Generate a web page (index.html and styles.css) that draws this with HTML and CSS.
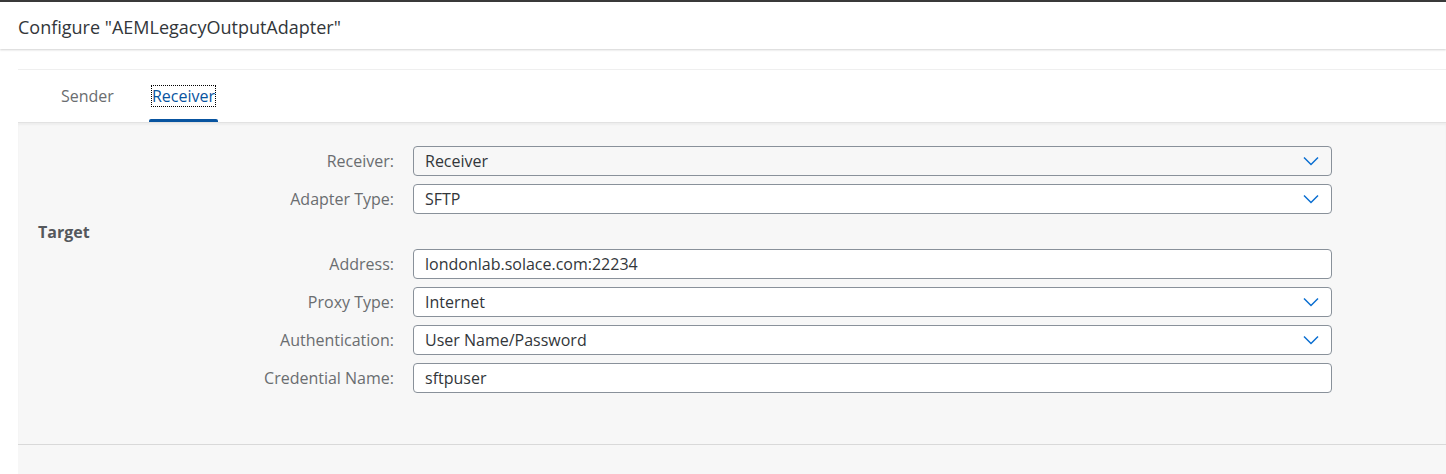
FILE: index.html
```html
<!DOCTYPE html>
<html lang="en">
<head>
<meta charset="utf-8">
<title>Configure AEMLegacyOutputAdapter</title>
<link rel="stylesheet" href="styles.css">
</head>
<body>
<div class="dialog">
  <header class="dlg-header">
    <h1 class="dlg-title">Configure "AEMLegacyOutputAdapter"</h1>
  </header>
  <div class="dlg-body">
    <nav class="tabbar">
      <div class="tab"><span class="tab-text">Sender</span></div>
      <div class="tab tab-active"><span class="tab-text tab-focus">Receiver</span></div>
    </nav>
    <section class="content">
      <div class="form">
        <div class="group">
          <label class="lbl">Receiver:</label>
          <div class="field field-ro">
            <span class="val">Receiver</span>
            <svg class="chev" width="16" height="10" viewBox="0 0 16 10"><polyline points="1,1.5 8,8.5 15,1.5" fill="none" stroke="#0a6ed1" stroke-width="1.5"/></svg>
          </div>
          <label class="lbl">Adapter Type:</label>
          <div class="field">
            <span class="val">SFTP</span>
            <svg class="chev" width="16" height="10" viewBox="0 0 16 10"><polyline points="1,1.5 8,8.5 15,1.5" fill="none" stroke="#0a6ed1" stroke-width="1.5"/></svg>
          </div>
        </div>
        <div class="group-title">Target</div>
        <div class="group">
          <label class="lbl">Address:</label>
          <div class="field"><span class="val">londonlab.solace.com:22234</span></div>
          <label class="lbl">Proxy Type:</label>
          <div class="field">
            <span class="val">Internet</span>
            <svg class="chev" width="16" height="10" viewBox="0 0 16 10"><polyline points="1,1.5 8,8.5 15,1.5" fill="none" stroke="#0a6ed1" stroke-width="1.5"/></svg>
          </div>
          <label class="lbl">Authentication:</label>
          <div class="field">
            <span class="val">User Name/Password</span>
            <svg class="chev" width="16" height="10" viewBox="0 0 16 10"><polyline points="1,1.5 8,8.5 15,1.5" fill="none" stroke="#0a6ed1" stroke-width="1.5"/></svg>
          </div>
          <label class="lbl">Credential Name:</label>
          <div class="field"><span class="val">sftpuser</span></div>
        </div>
      </div>
    </section>
    <div class="footer"></div>
  </div>
</div>
</body>
</html>
```
FILE: styles.css
```css
html, body {
  margin: 0;
  padding: 0;
  background: #ffffff;
}
body {
  font-family: "Open Sans", "Liberation Sans", Arial, sans-serif;
  color: #32363a;
  height: 474px;
  overflow: hidden;
}
.dialog {
  border-top: 2px solid #3a3a3a;
}
.dlg-header {
  height: 47px;
  display: flex;
  align-items: center;
  padding-left: 18px;
  background: #fff;
  box-shadow: 0 1px 2px rgba(0,0,0,0.18);
  position: relative;
}
.dlg-title {
  margin: 0;
  font-size: 18px;
  font-weight: normal;
  color: #32363a;
  padding-top: 2px;
}
.dlg-body {
  margin-left: 18px;
  padding-top: 20px;
}
.tabbar {
  height: 52px;
  border-top: 1px solid #efefef;
  display: flex;
  align-items: stretch;
  padding-left: 40px;
  gap: 32px;
  background: #fff;
}
.tab {
  display: flex;
  align-items: center;
  padding: 0 3px;
  font-size: 16px;
  color: #6a6d70;
  position: relative;
}
.tab-active {
  color: #0854a0;
}
.tab-active::after {
  content: "";
  position: absolute;
  left: 0;
  right: 0;
  bottom: 0;
  height: 3px;
  background: #0854a0;
  border-radius: 2px 2px 0 0;
}
.tab-focus {
  outline: 1px dotted #000;
  outline-offset: 0;
  line-height: 20px;
}
.content {
  background: #f7f7f7;
  border-top: 1px solid #e2e2e2;
  box-shadow: inset 0 2px 2px rgba(0,0,0,0.04);
  padding: 23px 114px 51px 0;
  border-bottom: 1px solid #d9d9d9;
}
.group {
  display: grid;
  grid-template-columns: 376px 1fr;
  column-gap: 19px;
  row-gap: 8px;
}
.group-title {
  height: 35px;
  display: flex;
  align-items: center;
  padding-left: 20px;
  font-size: 16px;
  font-weight: bold;
  color: #55585c;
}
.lbl {
  text-align: right;
  font-size: 16px;
  color: #6a6d70;
  line-height: 30px;
}
.field {
  height: 30px;
  box-sizing: border-box;
  border: 1px solid #89919a;
  border-radius: 4px;
  background: #fff;
  display: flex;
  align-items: center;
  padding: 0 12px 0 11px;
  font-size: 16px;
  color: #32363a;
}
.field-ro {
  background: #f7f7f7;
}
.val {
  flex: 1;
}
.chev {
  display: block;
}
.footer {
  background: #f7f7f7;
  height: 40px;
}
```
